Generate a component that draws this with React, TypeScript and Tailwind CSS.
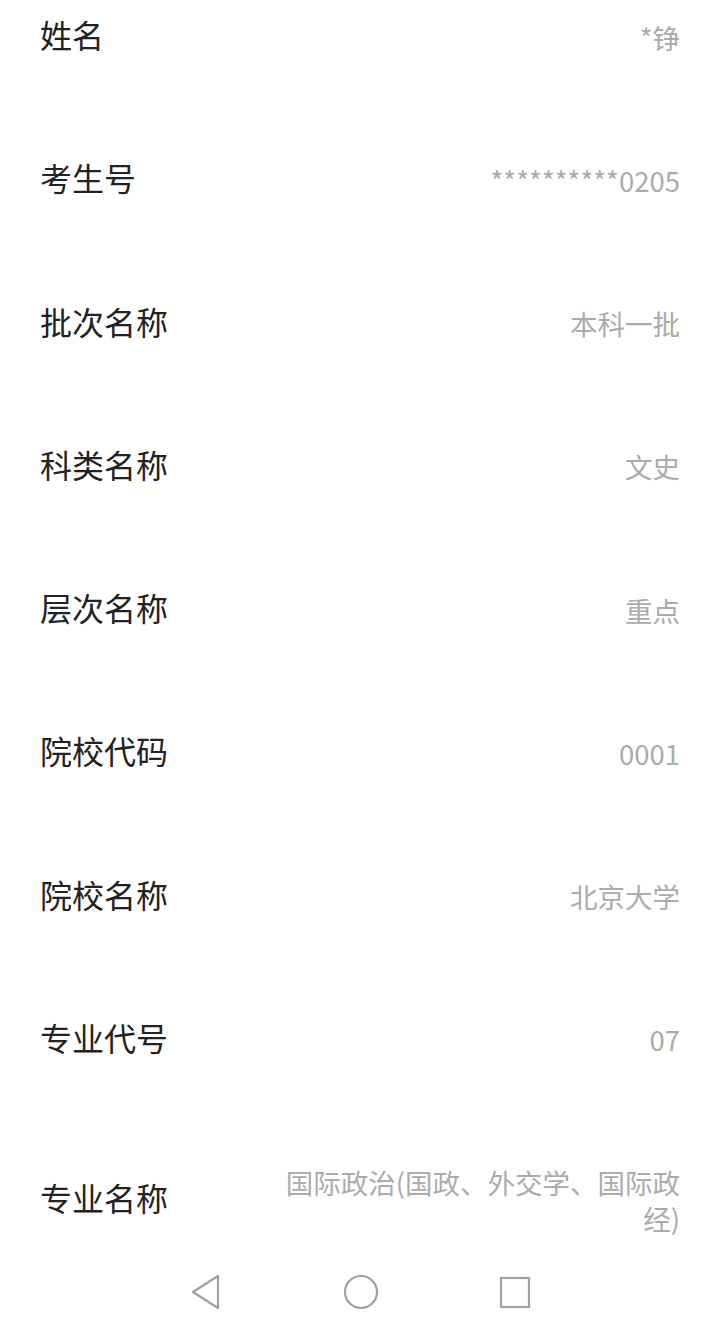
import React from 'react';

const ROWS: { label: string; value: string }[] = [
  { label: '姓名', value: '*铮' },
  { label: '考生号', value: '**********0205' },
  { label: '批次名称', value: '本科一批' },
  { label: '科类名称', value: '文史' },
  { label: '层次名称', value: '重点' },
  { label: '院校代码', value: '0001' },
  { label: '院校名称', value: '北京大学' },
  { label: '专业代号', value: '07' },
  { label: '专业名称', value: '国际政治(国政、外交学、国际政经)' },
];

const font = { fontFamily: '"Noto Sans CJK SC", Roboto, "Noto Sans", sans-serif' };

const App: React.FC = () => {
  return (
    <div className="bg-white h-screen flex flex-col overflow-hidden" style={font}>
      <div className="flex-1 overflow-hidden">
        <div className="-mt-[37px]">
          {ROWS.map((row, idx) => (
            <div key={idx} className="flex items-center justify-between py-[51px] pl-[40px] pr-[41px]">
              <span className="text-[32px] leading-[41.25px] text-[#222222] shrink-0">{row.label}</span>
              <span className="text-[27.5px] leading-[36px] text-[#ababab] text-right max-w-[412px] pt-[4px]">
                {row.value}
              </span>
            </div>
          ))}
        </div>
      </div>

      {/* Nav bar */}
      <div className="h-[76px] shrink-0 bg-white flex items-start pt-[21px]">
        <div className="w-full flex items-center justify-center gap-[120px]">
          <svg width="32" height="36" viewBox="0 0 32 36" fill="none">
            <path d="M2 18 L27 2 L27 34 Z" stroke="#a0a0a0" strokeWidth="2.2" strokeLinejoin="round" />
          </svg>
          <svg width="36" height="36" viewBox="0 0 36 36" fill="none">
            <circle cx="18" cy="18" r="16" stroke="#a0a0a0" strokeWidth="2.2" />
          </svg>
          <svg width="32" height="32" viewBox="0 0 32 32" fill="none">
            <rect x="2" y="2" width="28" height="29" stroke="#a0a0a0" strokeWidth="2.2" />
          </svg>
        </div>
      </div>
    </div>
  );
};

export default App;
